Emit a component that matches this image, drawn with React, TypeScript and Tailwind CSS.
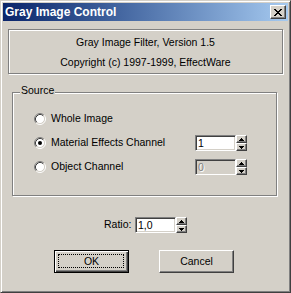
import React from "react";

const Radio = ({ checked }: { checked?: boolean }) => (
  <svg width="12" height="12" viewBox="0 0 12 12" className="shrink-0">
    <circle cx="6" cy="6" r="4.5" fill="#fff" />
    <path d="M2.11 9.89 A5.5 5.5 0 0 1 9.89 2.11" stroke="#808080" fill="none" />
    <path d="M9.89 2.11 A5.5 5.5 0 0 1 2.11 9.89" stroke="#fff" fill="none" />
    <path d="M2.82 9.18 A4.5 4.5 0 0 1 9.18 2.82" stroke="#404040" fill="none" />
    <path d="M9.18 2.82 A4.5 4.5 0 0 1 2.82 9.18" stroke="#d4d0c8" fill="none" />
    {checked && <circle cx="6" cy="6" r="2" fill="#000" />}
  </svg>
);

const Arrow = ({ up }: { up?: boolean }) => (
  <svg width="5" height="3" viewBox="0 0 5 3" shapeRendering="crispEdges">
    {up ? (
      <path d="M2 0h1v1H2zM1 1h3v1H1zM0 2h5v1H0z" fill="#000" />
    ) : (
      <path d="M0 0h5v1H0zM1 1h3v1H1zM2 2h1v1H2z" fill="#000" />
    )}
  </svg>
);

const SpinBtn = () => (
  <div className="w-[11px] h-[16px] flex flex-col">
    <div className="h-[8px] flex items-center justify-center bg-[#d4d0c8] border border-t-white border-l-white border-r-[#404040] border-b-[#404040] shadow-[inset_-1px_-1px_0_#808080]">
      <Arrow up />
    </div>
    <div className="h-[8px] flex items-center justify-center bg-[#d4d0c8] border border-t-white border-l-white border-r-[#404040] border-b-[#404040] shadow-[inset_-1px_-1px_0_#808080]">
      <Arrow />
    </div>
  </div>
);

const Spin = ({ value, disabled, width = 41 }: { value: string; disabled?: boolean; width?: number }) => (
  <div className="flex items-center">
    <div
      className={
        "h-[16px] flex items-center pl-[2px] leading-[12px] border border-t-[#808080] border-l-[#808080] border-r-white border-b-white shadow-[inset_1px_1px_0_#404040,inset_-1px_-1px_0_#d4d0c8] " +
        (disabled ? "bg-[#d4d0c8] text-[#808080] [text-shadow:1px_1px_0_#fff]" : "bg-white text-black")
      }
      style={{ width }}
    >
      {value}
    </div>
    <SpinBtn />
  </div>
);

const CloseX = () => (
  <svg width="8" height="7" viewBox="0 0 8 7" shapeRendering="crispEdges">
    <path
      d="M0 0h2v1H0zM6 0h2v1H6zM1 1h2v1H1zM5 1h2v1H5zM2 2h4v1H2zM3 3h2v1H3zM2 4h4v1H2zM1 5h2v1H1zM5 5h2v1H5zM0 6h2v1H0zM6 6h2v1H6z"
      fill="#000"
    />
  </svg>
);

export default function App() {
  return (
    <div className="w-[291px] h-[293px] bg-[#d4d0c8] border border-t-[#d4d0c8] border-l-[#d4d0c8] border-r-[#404040] border-b-[#404040] shadow-[inset_1px_1px_0_#fff,inset_-1px_-1px_0_#808080] p-[2px] flex flex-col font-['Liberation_Sans',Arial,sans-serif] text-[10.5px] text-black">
      <div className="h-[18px] shrink-0 flex items-center bg-linear-to-r from-[#0a246a] to-[#a6caf0] pl-[2px] pr-[2px]">
        <span className="text-white font-bold text-[12px] leading-[14px]">Gray Image Control</span>
        <div className="ml-auto w-[16px] h-[14px] flex items-center justify-center bg-[#d4d0c8] border border-t-white border-l-white border-r-[#404040] border-b-[#404040] shadow-[inset_-1px_-1px_0_#808080]">
          <CloseX />
        </div>
      </div>

      <div className="mt-[8px] mx-[5px] h-[45px] shrink-0 border border-[#808080] shadow-[1px_1px_0_#fff,inset_1px_1px_0_#fff] flex flex-col items-center pt-[2px] leading-[20px]">
        <div>Gray Image Filter, Version 1.5</div>
        <div>Copyright (c) 1997-1999, EffectWare</div>
      </div>

      <div className="relative mt-[18px] ml-[9px] w-[265px] h-[104px] shrink-0 border border-[#808080] shadow-[1px_1px_0_#fff,inset_1px_1px_0_#fff] pt-[14px]">
        <div className="absolute left-[7px] top-[-9px] px-[1px] bg-[#d4d0c8] leading-[13px]">Source</div>
        <div className="h-[24px] flex items-center pl-[21px]">
          <Radio />
          <span className="ml-[5px]">Whole Image</span>
        </div>
        <div className="h-[24px] flex items-center pl-[21px]">
          <Radio checked />
          <span className="ml-[5px] w-[144px]">Material Effects Channel</span>
          <Spin value="1" />
        </div>
        <div className="h-[24px] flex items-center pl-[21px]">
          <Radio />
          <span className="ml-[5px] w-[144px]">Object Channel</span>
          <Spin value="0" disabled />
        </div>
      </div>

      <div className="mt-[21px] h-[16px] shrink-0 flex items-center ml-[101px]">
        <span className="w-[31px]">Ratio:</span>
        <Spin value="1,0" />
      </div>

      <div className="mt-[17px] flex ml-[51px] gap-[30px]">
        <div className="relative w-[75px] h-[23px] border border-black bg-[#d4d0c8] shadow-[inset_1px_1px_0_#fff,inset_-1px_-1px_0_#404040,inset_-2px_-2px_0_#808080] flex items-center justify-center">
          <span>OK</span>
          <div className="absolute left-[3px] top-[3px] right-[4px] bottom-[4px] border border-dotted border-black" />
        </div>
        <div className="w-[75px] h-[23px] border border-t-white border-l-white border-r-[#404040] border-b-[#404040] bg-[#d4d0c8] shadow-[inset_-1px_-1px_0_#808080] flex items-center justify-center">
          <span>Cancel</span>
        </div>
      </div>
    </div>
  );
}
